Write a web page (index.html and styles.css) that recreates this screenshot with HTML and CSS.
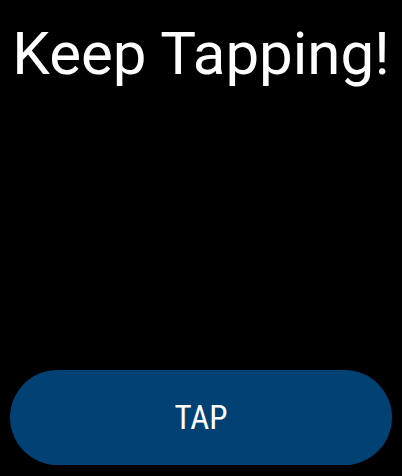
FILE: index.html
```html
<!DOCTYPE html>
<html>
<head>
    <meta charset="UTF-8">
    <title>Keep Tapping</title>
    <link rel="stylesheet" href="styles.css">
</head>
<body>
    <div class="screen">
        <h1 class="title">Keep Tapping!</h1>
        <button class="tap-button">TAP</button>
    </div>
</body>
</html>
```

FILE: styles.css
```css
* {
    margin: 0;
    padding: 0;
    box-sizing: border-box;
}

html, body {
    height: 100%;
}

body {
    background: #000;
    color: #fff;
    font-family: Roboto, 'Noto Sans', sans-serif;
    overflow: hidden;
}

.screen {
    height: 100%;
    display: flex;
    flex-direction: column;
    justify-content: space-between;
    padding: 19px 10px 11px;
}

.title {
    font-size: 60px;
    font-weight: 400;
    line-height: 70px;
    text-align: center;
    white-space: nowrap;
}

.tap-button {
    width: 100%;
    height: 95px;
    border: none;
    border-radius: 48px;
    background: #024174;
    color: #fff;
    font-family: 'Roboto Condensed', Roboto, sans-serif;
    font-stretch: condensed;
    font-size: 33px;
}
```
